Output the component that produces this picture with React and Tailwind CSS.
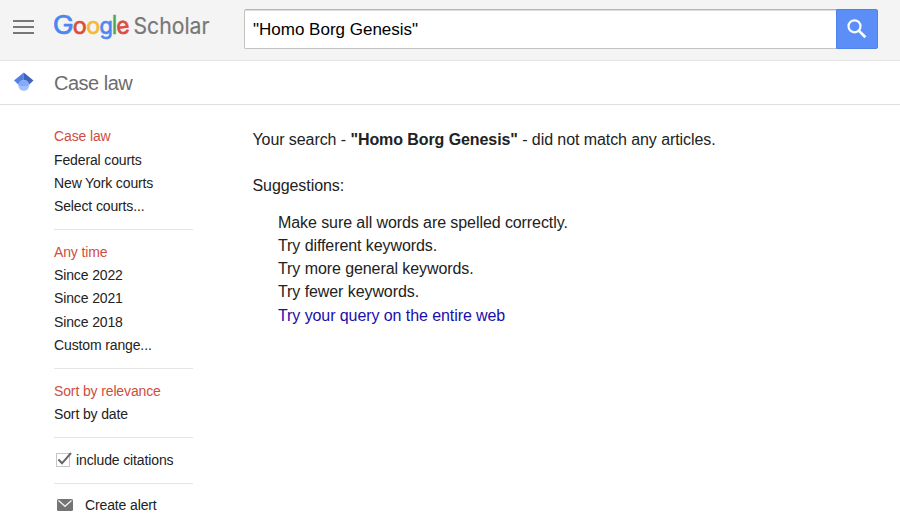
import React from 'react';

const filterGroups = [
  ['Case law', 'Federal courts', 'New York courts', 'Select courts...'],
  ['Any time', 'Since 2022', 'Since 2021', 'Since 2018', 'Custom range...'],
  ['Sort by relevance', 'Sort by date'],
];

const suggestions = [
  'Make sure all words are spelled correctly.',
  'Try different keywords.',
  'Try more general keywords.',
  'Try fewer keywords.',
];

const Logo = () => (
  <svg width="160" height="36" viewBox="0 0 160 36" className="font-[Inter]">
    <g fontSize="23.5" strokeWidth="0.7">
      <text x="-1.2" y="25.7" fontSize="25.5" textLength="21" lengthAdjust="spacingAndGlyphs" fill="#4d86f0" stroke="#4d86f0">G</text>
      <text x="18.8" y="25.7" textLength="14" lengthAdjust="spacingAndGlyphs" fill="#dd4b3b" stroke="#dd4b3b">o</text>
      <text x="32.2" y="25.7" textLength="14" lengthAdjust="spacingAndGlyphs" fill="#f2bb35" stroke="#f2bb35">o</text>
      <text x="45.4" y="25.7" textLength="13.4" lengthAdjust="spacingAndGlyphs" fill="#4d86f0" stroke="#4d86f0">g</text>
      <text x="58" y="25.7" fontSize="25" textLength="5" lengthAdjust="spacingAndGlyphs" fill="#4aa55a" stroke="#4aa55a">l</text>
      <text x="62.3" y="25.7" textLength="13" lengthAdjust="spacingAndGlyphs" transform="rotate(-7 68.8 19)" fill="#dd4b3b" stroke="#dd4b3b">e</text>
    </g>
    <text x="79.5" y="25.5" textLength="76" lengthAdjust="spacingAndGlyphs" fontSize="22.5" fill="#777777" stroke="#777777" strokeWidth="0.2">Scholar</text>
  </svg>
);

const Divider = () => <div className="mt-[11px] mb-[10.5px] h-px w-[139px] bg-[#e5e5e5]" />;

const App = () => {
  return (
    <div className="h-[526px] w-[900px] overflow-hidden bg-white font-['Liberation_Sans',Arial,sans-serif] text-[#222]">
      <header className="flex h-[61px] items-start border-b border-[#e3e3e3] bg-[#f4f4f4]">
        <div className="flex w-[54px] shrink-0 flex-col gap-1 pt-5 pl-[13px]">
          <span className="h-[2px] w-[21px] bg-[#777]" />
          <span className="h-[2px] w-[21px] bg-[#777]" />
          <span className="h-[2px] w-[21px] bg-[#777]" />
        </div>
        <div className="w-[190px] shrink-0 pt-2">
          <Logo />
        </div>
        <form className="mt-[9px] flex h-[40px] w-[634px]" onSubmit={(e) => e.preventDefault()}>
          <input
            type="text"
            defaultValue={'"Homo Borg Genesis"'}
            className="w-[592px] rounded-l-[2px] border border-r-0 border-[#c3c3c3] border-t-[#b5b5b5] bg-white px-2 pt-[2px] text-[17px] text-black shadow-[inset_0_1px_0_#ddd] outline-none"
          />
          <button type="submit" aria-label="Search" className="flex w-[42px] items-center justify-center rounded-r-[2px] border border-[#5083ea] bg-[#5b8ff7]">
            <svg width="20" height="20" viewBox="0 0 20 20" fill="none" stroke="#fff">
              <circle cx="7.5" cy="7.3" r="6" strokeWidth="2.2" />
              <path d="M11.8 11.6 18.4 18.2" strokeWidth="2.7" />
            </svg>
          </button>
        </form>
      </header>

      <div className="flex h-[44px] items-center border-b border-[#e0e0e0]">
        <div className="w-[54px] pb-[2px] pl-[13px]">
          <svg width="22" height="20" viewBox="0 0 22 20">
            <path d="M1 8.5 10.8 0.5V15H8z" fill="#5080e5" />
            <path d="M10.8 0.5 20.5 8.5 14 14.5H10.8z" fill="#4264b8" />
            <circle cx="10.8" cy="13.3" r="5.5" fill="#a0c0ff" />
            <path d="M5.4 12.6a5.5 5.5 0 0 1 10.8 0L14.5 14H7.1z" fill="#86abf6" />
          </svg>
        </div>
        <h1 className="text-[20px] tracking-[-0.5px] text-[#6d6d6d]">Case law</h1>
      </div>

      <div className="flex">
        <nav className="w-[252.5px] shrink-0 pt-[20.3px] pl-[54px] text-[14px] leading-[23.25px] tracking-[-0.13px]">
          {filterGroups.map((group) => (
            <div key={group[0]}>
              <ul>
                {group.map((item, i) => (
                  <li key={item} className={i === 0 ? 'text-[#cf4d3e]' : ''}>{item}</li>
                ))}
              </ul>
              <Divider />
            </div>
          ))}
          <div className="flex items-center pl-[2px]">
            <svg width="17" height="16" viewBox="0 0 17 16" fill="none">
              <rect x="0.5" y="1.5" width="13" height="13" stroke="#c6c6c6" />
              <path d="M2.5 7.5 6 11.3 15 1" stroke="#666" strokeWidth="2" />
            </svg>
            <span className="ml-[3px]">include citations</span>
          </div>
          <Divider />
          <div className="flex items-center pl-[3px]">
            <svg width="16" height="12" viewBox="0 0 16 12" className="mb-[2px]">
              <rect width="16" height="12" rx="1.5" fill="#747474" />
              <path d="M1.5 1.5 8 7.3 14.5 1.5" fill="none" stroke="#eee" strokeWidth="1.4" />
            </svg>
            <span className="ml-3">Create alert</span>
          </div>
        </nav>

        <main className="pt-[23px] text-[16px] leading-[23.3px] tracking-[-0.08px]">
          <p>
            Your search - <b>"Homo Borg Genesis"</b> - did not match any articles.
          </p>
          <p className="mt-[23px]">Suggestions:</p>
          <ul className="mt-[13px] ml-[25.5px]">
            {suggestions.map((text) => (
              <li key={text}>{text}</li>
            ))}
            <li>
              <a href="#" className="text-[#1a0dab]">Try your query on the entire web</a>
            </li>
          </ul>
        </main>
      </div>
    </div>
  );
};

export default App;
